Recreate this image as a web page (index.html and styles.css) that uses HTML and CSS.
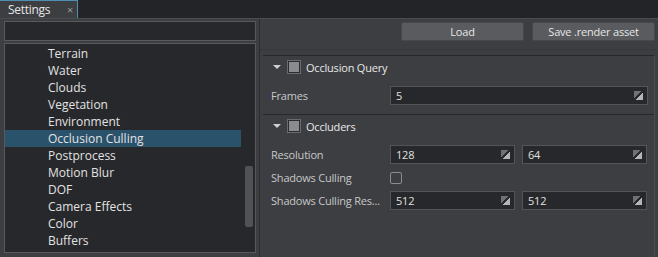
FILE: index.html
```html
<!DOCTYPE html>
<html lang="en">
<head>
    <meta charset="UTF-8">
    <title>Settings</title>
    <link rel="stylesheet" href="styles.css">
</head>
<body>

<div class="tabbar">
    <div class="tab">Settings <span class="tab-close">&times;</span></div>
</div>

<div class="window">
    <div class="sidebar">
        <input type="text" class="search">
        <div class="list">
            <div class="item">Terrain</div>
            <div class="item">Water</div>
            <div class="item">Clouds</div>
            <div class="item">Vegetation</div>
            <div class="item">Environment</div>
            <div class="item selected">Occlusion Culling</div>
            <div class="item">Postprocess</div>
            <div class="item">Motion Blur</div>
            <div class="item">DOF</div>
            <div class="item">Camera Effects</div>
            <div class="item">Color</div>
            <div class="item">Buffers</div>
            <div class="scrollbar"></div>
        </div>
    </div>

    <div class="content">
        <div class="toolbar">
            <button class="btn">Load</button>
            <button class="btn">Save .render asset</button>
        </div>

        <div class="props">
            <div class="group-header">
                <span class="arrow"></span>
                <span class="group-check"></span>
                Occlusion Query
            </div>
            <div class="row">
                <div class="label">Frames</div>
                <div class="field wide">5<span class="grip"></span></div>
            </div>

            <div class="group-header sep">
                <span class="arrow"></span>
                <span class="group-check"></span>
                Occluders
            </div>
            <div class="row">
                <div class="label">Resolution</div>
                <div class="field">128<span class="grip"></span></div>
                <div class="field">64<span class="grip"></span></div>
            </div>
            <div class="row short">
                <div class="label">Shadows Culling</div>
                <span class="checkbox"></span>
            </div>
            <div class="row">
                <div class="label">Shadows Culling Res...</div>
                <div class="field">512<span class="grip"></span></div>
                <div class="field">512<span class="grip"></span></div>
            </div>
        </div>
    </div>
</div>

</body>
</html>
```

FILE: styles.css
```css
body {
    margin: 0;
    width: 658px;
    height: 257px;
    overflow: hidden;
    background-color: #3c3e42;
    font-family: "Open Sans", "Noto Sans", sans-serif;
    font-size: 11px;
    letter-spacing: -0.2px;
    color: #dcdcdc;
}
.tabbar {
    height: 18px;
    background-color: #232427;
    display: flex;
}
.tab {
    width: 69px;
    height: 17px;
    padding-left: 8px;
    background-color: #3c3e42;
    border-top: 1px solid #4e8fb3;
    border-right: 1px solid #4e8fb3;
    line-height: 17px;
    font-size: 12px;
    letter-spacing: -0.3px;
    color: #e6e6e6;
}
.tab-close {
    margin-left: 14px;
    font-size: 11px;
    color: #9a9a9a;
}
.window {
    display: flex;
    height: 239px;
    border-top: 1px solid #4a4c50;
    box-sizing: border-box;
}
.sidebar {
    flex-shrink: 0;
    width: 260px;
    padding: 2px 3px 4px 4px;
    box-sizing: border-box;
    display: flex;
    flex-direction: column;
    gap: 2px;
    border-right: 1px solid #2c2d30;
}
.search {
    height: 20px;
    margin: 0;
    background-color: #27282b;
    border: 1px solid #58595d;
    box-sizing: border-box;
    outline: none;
}
.list {
    position: relative;
    flex: 1;
    background-color: #27282b;
    border: 1px solid #58595d;
    padding-top: 1px;
    overflow: hidden;
    font-size: 12px;
    letter-spacing: 0;
}
.item {
    height: 17px;
    line-height: 17px;
    padding-left: 43px;
    margin-right: 14px;
    color: #e2e2e2;
}
.item.selected {
    background-color: #2b526b;
}
.scrollbar {
    position: absolute;
    right: 2px;
    top: 122px;
    width: 8px;
    height: 61px;
    border-radius: 2px;
    background-color: #505256;
}
.content {
    flex: 1;
    min-width: 0;
    display: flex;
    flex-direction: column;
}
.toolbar {
    display: flex;
    justify-content: flex-end;
    gap: 8px;
    padding: 3px 3px 0 0;
    height: 27px;
    border-bottom: 1px solid #35373a;
}
.btn {
    width: 123px;
    height: 19px;
    padding: 0;
    background-color: #595b5f;
    border: 1px solid #46484c;
    border-radius: 2px;
    font-family: inherit;
    font-size: 11px;
    letter-spacing: inherit;
    color: #e6e6e6;
}
.props {
    margin: 5px 3px 0 3px;
    border-top: 1px solid #27282b;
    border-right: 1px solid #4a4c50;
    flex: 1;
}
.group-header {
    height: 25px;
    box-sizing: border-box;
    padding: 0 0 3px 10px;
    display: flex;
    align-items: center;
    color: #e8e8e8;
}
.group-header.sep {
    height: 26px;
    border-top: 1px solid #27282b;
    margin-top: 9px;
}
.arrow {
    width: 0;
    height: 0;
    border-left: 4px solid transparent;
    border-right: 4px solid transparent;
    border-top: 4px solid #d0d0d0;
    margin-right: 7px;
}
.group-check {
    width: 10px;
    height: 10px;
    background-color: #8a8b8e;
    border: 1px solid #2c2d30;
    box-shadow: 0 0 0 1px #6a6b6e;
    margin-right: 6px;
}
.row {
    display: flex;
    align-items: center;
    gap: 7px;
    height: 19px;
    margin: 5px 0 5px 0;
}
.row.short {
    height: 17px;
}
.label {
    width: 120px;
    padding-left: 8px;
    box-sizing: border-box;
    color: #c8c8c8;
    white-space: nowrap;
    overflow: hidden;
}
.field {
    position: relative;
    width: 125px;
    height: 19px;
    box-sizing: border-box;
    background-color: #27282b;
    border: 1px solid #535458;
    padding-left: 5px;
    line-height: 17px;
    color: #e0e0e0;
}
.field.wide {
    width: 258px;
}
.grip {
    position: absolute;
    right: 4px;
    top: 4px;
    width: 9px;
    height: 9px;
    background: linear-gradient(to bottom right, #707174 0 42%, #27282b 42% 56%, #b4b5b8 56%);
}
.checkbox {
    width: 10px;
    height: 10px;
    border: 1px solid #8a8b8e;
    border-radius: 2px;
}
```
